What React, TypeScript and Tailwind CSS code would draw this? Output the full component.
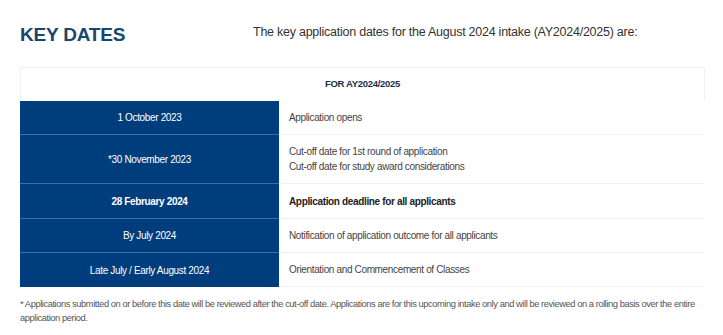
import React from 'react'

interface Row {
  date: string
  events: string[]
  bold?: boolean
  height: string
}

const rows: Row[] = [
  { date: '1 October 2023', events: ['Application opens'], height: 'h-[34px]' },
  {
    date: '*30 November 2023',
    events: ['Cut-off date for 1st round of application', 'Cut-off date for study award considerations'],
    height: 'h-[49px]',
  },
  { date: '28 February 2024', events: ['Application deadline for all applicants'], bold: true, height: 'h-[35px]' },
  { date: 'By July 2024', events: ['Notification of application outcome for all applicants'], height: 'h-[34px]' },
  { date: 'Late July / Early August 2024', events: ['Orientation and Commencement of Classes'], height: 'h-[34px]' },
]

export default function App() {
  return (
    <div className="min-h-[335px] w-[723px] bg-white px-[20px] pt-[24px] font-['Liberation_Sans',Arial,sans-serif]">
      <div className="flex items-start">
        <h1 className="w-[233px] text-[19px] font-bold leading-[21px] tracking-[-0.2px] text-[#17466e]">KEY DATES</h1>
        <p className="text-[12.5px] leading-[17px] tracking-[-0.25px] text-[#333]">
          The key application dates for the August 2024 intake (AY2024/2025) are:
        </p>
      </div>

      <div className="mt-[22px] w-[685px] tracking-[-0.35px]">
        <div className="flex h-[34px] items-center justify-center border-x border-t border-[#f1f1f1] text-[9.5px] font-bold tracking-[-0.3px] text-[#1b2f4d]">
          FOR AY2024/2025
        </div>
        {rows.map((row, i) => (
          <div key={i} className={`flex ${row.height}`}>
            <div
              className={`flex w-[259px] items-center justify-center bg-[#003d7c] text-[10px] text-white ${
                i < rows.length - 1 ? 'border-b border-[#3d6ca6]' : ''
              } ${row.bold ? 'font-bold' : ''}`}
            >
              {row.date}
            </div>
            <div
              className={`flex flex-1 flex-col justify-center border-b border-[#f1f1f1] pl-[10px] text-[10px] leading-[15px] ${
                row.bold ? 'font-bold text-[#222]' : 'text-[#444]'
              }`}
            >
              {row.events.map((e) => (
                <span key={e}>{e}</span>
              ))}
            </div>
          </div>
        ))}
      </div>

      <p className="mt-[10px] whitespace-nowrap text-[9.3px] leading-[14px] tracking-[-0.42px] text-[#555]">
        * Applications submitted on or before this date will be reviewed after the cut-off date. Applications are for this
        upcoming intake only and will be reviewed on a rolling basis over the entire
        <br />
        application period.
      </p>
    </div>
  )
}
